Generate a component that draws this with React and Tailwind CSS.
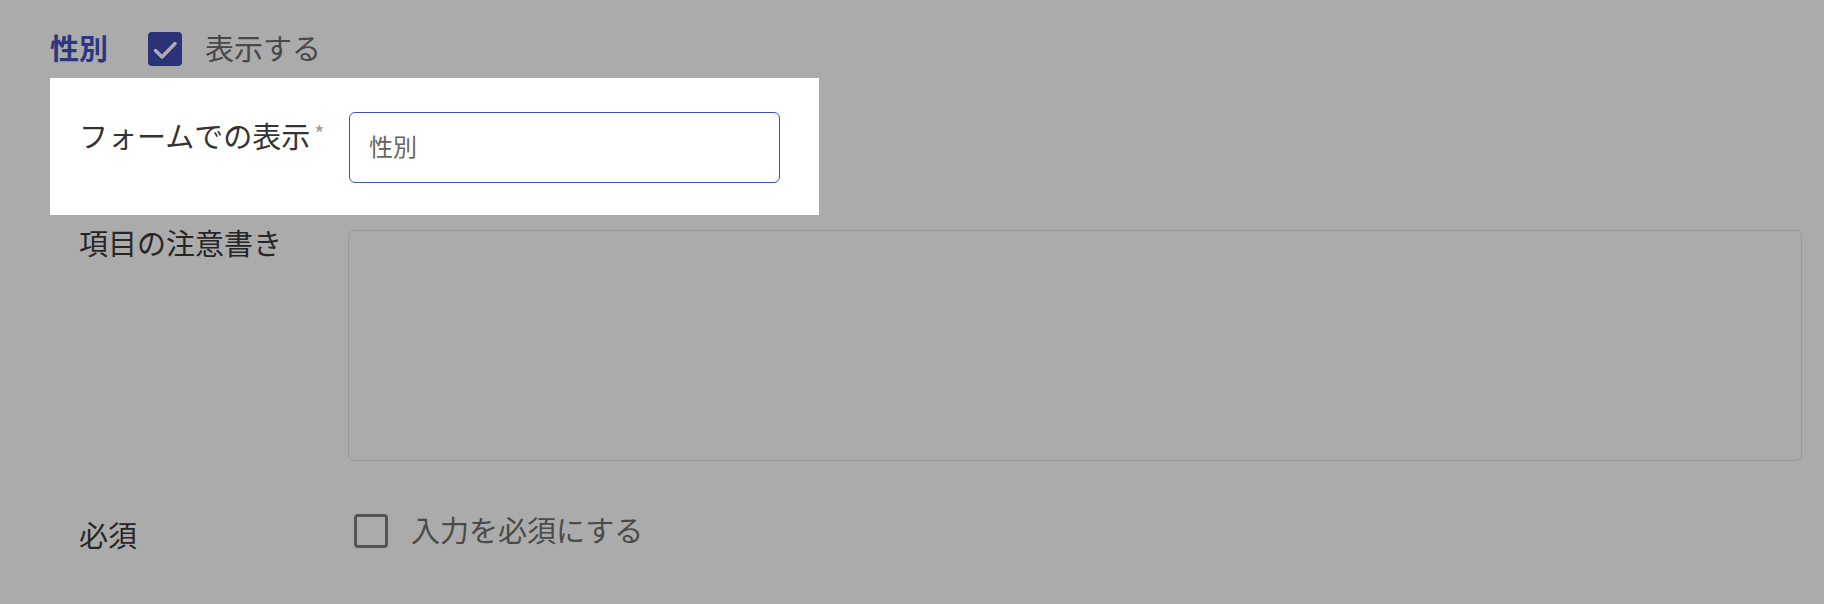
export default function App() {
    return (
        <div className="w-full h-[604px] bg-[#ababab] pl-[50px] pr-[22px] pt-[32px] overflow-hidden" style={{ fontFamily: '"Noto Sans CJK JP", "Noto Sans", sans-serif' }}>
            <div className="flex items-center h-[34px]">
                <span className="-mt-[4px] text-[29px] font-bold text-[#2c3780] leading-none">性別</span>
                <span className="ml-[40px] w-[34px] h-[34px] rounded-[4px] bg-[#2b3278] flex items-center justify-center">
                    <svg width="34" height="34" viewBox="0 0 34 34">
                        <polyline points="7.5,18.5 14,25 27,11.5" fill="none" stroke="#aeaeae" strokeWidth="3.5" strokeLinecap="round" strokeLinejoin="round" />
                    </svg>
                </span>
                <span className="-mt-[4px] ml-[23px] text-[29px] text-[#484848] leading-none">表示する</span>
            </div>

            <div className="mt-[12px] w-[769px] h-[137px] bg-white flex pl-[29px] pt-[34px]">
                <div className="w-[270px] shrink-0 pt-[3px] flex items-start">
                    <span className="text-[29px] leading-[40px] text-[#333]">フォームでの表示</span>
                    <span className="ml-[4px] mt-[6px] text-[22px] leading-[22px] text-[#999]">*</span>
                </div>
                <div className="w-[431px] h-[71px] border-[1.5px] border-[#3f4fb8] rounded-[6px] flex items-center pl-[19px] pb-[4px]">
                    <span className="text-[24px] text-[#666] leading-none">性別</span>
                </div>
            </div>

            <div className="mt-[15px] flex pl-[29px]">
                <div className="w-[269px] shrink-0 -mt-[8px]">
                    <span className="text-[29px] leading-[40px] text-[#262626]">項目の注意書き</span>
                </div>
                <div className="flex-1 h-[231px] border border-[#999] rounded-[6px]" />
            </div>

            <div className="mt-[47px] flex pl-[29px] items-center">
                <div className="w-[275px] shrink-0 pt-[6px]">
                    <span className="text-[29px] leading-[40px] text-[#262626]">必須</span>
                </div>
                <span className="w-[34px] h-[34px] rounded-[4px] border-[3px] border-[#555]" />
                <span className="-mt-[4px] ml-[23px] text-[29px] leading-[40px] text-[#4a4a4a]">入力を必須にする</span>
            </div>
        </div>
    );
}
